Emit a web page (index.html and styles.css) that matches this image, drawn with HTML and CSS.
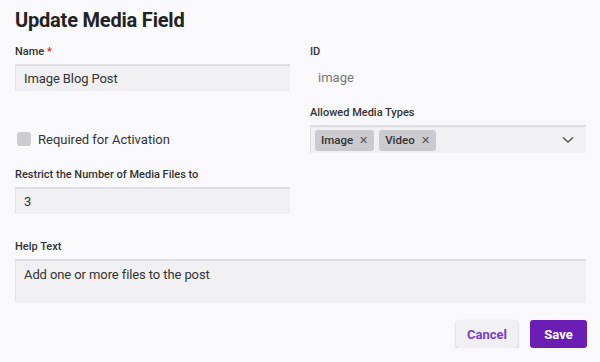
FILE: index.html
```html
<!DOCTYPE html>
<html lang="en">
<head>
  <meta charset="UTF-8" />
  <title>Update Media Field</title>
  <link rel="stylesheet" href="styles.css">
</head>
<body>
  <main class="dialog">
    <h1 class="dialog-title">Update Media Field</h1>

    <div class="form-grid">
      <div class="field">
        <label class="field-label">Name <span class="required">*</span></label>
        <input type="text" class="field-input" value="Image Blog Post">
      </div>
      <div class="field">
        <label class="field-label">ID</label>
        <div class="field-static">image</div>
      </div>

      <div class="field field-check">
        <label class="check">
          <span class="check-box"></span>
          <span class="check-text">Required for Activation</span>
        </label>
      </div>
      <div class="field">
        <label class="field-label">Allowed Media Types</label>
        <div class="multi-select">
          <span class="chip">Image <span class="chip-x">&#x2715;</span></span>
          <span class="chip">Video <span class="chip-x">&#x2715;</span></span>
          <svg class="chevron" width="12" height="8" viewBox="0 0 12 8">
            <path d="M1 1.5 L6 6 L11 1.5" fill="none" stroke="#555" stroke-width="1.5"/>
          </svg>
        </div>
      </div>

      <div class="field">
        <label class="field-label">Restrict the Number of Media Files to</label>
        <input type="text" class="field-input" value="3">
      </div>
      <div></div>

      <div class="field field-wide">
        <label class="field-label">Help Text</label>
        <textarea class="field-input field-area">Add one or more files to the post</textarea>
      </div>
    </div>

    <div class="actions">
      <button class="btn btn-cancel">Cancel</button>
      <button class="btn btn-save">Save</button>
    </div>
  </main>
</body>
</html>
```

FILE: styles.css
```css
:root {
  --bg: #f9f9fb;
  --field-bg: #f0f0f2;
  --text: #333333;
  --muted: #777777;
  --purple: #6a1eb3;
  --purple-text: #7a3fc2;
  --chip: #cacacf;
}
* { box-sizing: border-box; }
body {
  margin: 0; background: var(--bg); color: var(--text);
  font-family: Roboto, "Liberation Sans", sans-serif;
}
.dialog {
  padding: 8px 13px 0 15px;
}
.dialog-title {
  font-size: 20px; line-height: 24px; font-weight: 700;
  margin: 0 0 13px; color: #222; letter-spacing: -0.2px;
}
.form-grid {
  display: grid; grid-template-columns: 275px 276px;
  column-gap: 20px; row-gap: 15px;
}
.field {
  display: flex; flex-direction: column;
}
.field-wide {
  grid-column: 1 / -1; margin-top: 11px;
}
.field-label {
  font-size: 11px; line-height: 14px; font-weight: 500;
  color: #333; margin-bottom: 5px;
}
.required { color: #e02020; }
.field-input {
  height: 27px; border: none; background: var(--field-bg);
  border-top: 2px solid #dedee0; border-left: 1px solid #e4e4e6;
  padding: 0 8px; font-family: inherit; font-size: 13px; color: var(--text);
  letter-spacing: -0.1px; outline: none;
}
.field-area {
  height: 44px; resize: none; padding: 5px 8px; line-height: 18px;
}
.field-static {
  height: 27px; display: flex; align-items: center;
  padding-left: 8px; font-size: 13px; color: var(--muted);
}
.field-check {
  justify-content: flex-end;
}
.check {
  height: 28px; display: flex; align-items: center; gap: 7px;
  padding-left: 2px;
}
.check-box {
  width: 14px; height: 14px; border-radius: 3px; background: #cbcbd0;
}
.check-text { font-size: 13px; }
.multi-select {
  height: 28px; background: var(--field-bg);
  border-top: 2px solid #dedee0; border-left: 1px solid #e4e4e6;
  display: flex; align-items: center; gap: 5px; padding: 0 4px;
}
.chip {
  height: 21px; display: inline-flex; align-items: center; gap: 6px;
  background: var(--chip); border-radius: 3px; padding: 0 6px;
  font-size: 11.5px; font-weight: 500; color: #333;
}
.chip-x { font-weight: 400; font-size: 11px; color: #555; }
.chevron { margin-left: auto; margin-right: 8px; }
.actions {
  display: flex; justify-content: flex-end; gap: 12px;
  margin-top: 17px;
}
.btn {
  height: 28px; border: none; border-radius: 3px;
  font-family: inherit; font-size: 13px; font-weight: 700; cursor: pointer;
}
.btn-cancel {
  width: 62px; background: var(--field-bg); color: var(--purple-text);
  box-shadow: 0 1px 2px rgba(0, 0, 0, 0.3);
}
.btn-save {
  width: 57px; background: var(--purple); color: #fff;
}
```
